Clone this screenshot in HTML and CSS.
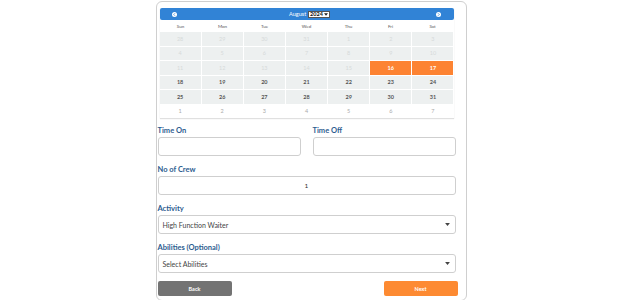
FILE: index.html
```html
<!DOCTYPE html>
<html lang="en">
  <head>
    <meta charset="UTF-8" />
    <title>Book Crew</title>
    <link rel="stylesheet" href="styles.css">
  </head>
  <body>
    <div class="cartao">
      <div class="calendario">
        <div class="cal-topo">
          <span class="seta-cal">
            <svg width="5" height="5" viewBox="0 0 10 10"><circle cx="5" cy="5" r="5" fill="#fff"/><path d="M6 2.5 L3.5 5 L6 7.5" stroke="#3183d6" stroke-width="1.6" fill="none"/></svg>
          </span>
          <div class="mes">
            <span>August</span>
            <span class="ano">2024 <svg width="4" height="3" viewBox="0 0 8 5"><path d="M0 0 L8 0 L4 5 Z" fill="#222"/></svg></span>
          </div>
          <span class="seta-cal">
            <svg width="5" height="5" viewBox="0 0 10 10"><circle cx="5" cy="5" r="5" fill="#fff"/><path d="M4 2.5 L6.5 5 L4 7.5" stroke="#3183d6" stroke-width="1.6" fill="none"/></svg>
          </span>
        </div>
        <div class="dias-semana">
          <span>Sun</span><span>Mon</span><span>Tue</span><span>Wed</span><span>Thu</span><span>Fri</span><span>Sat</span>
        </div>
        <div class="grade">
          <span class="passado">28</span><span class="passado">29</span><span class="passado">30</span><span class="passado">31</span><span class="passado">1</span><span class="passado">2</span><span class="passado">3</span>
          <span class="passado">4</span><span class="passado">5</span><span class="passado">6</span><span class="passado">7</span><span class="passado">8</span><span class="passado">9</span><span class="passado">10</span>
          <span class="passado">11</span><span class="passado">12</span><span class="passado">13</span><span class="passado">14</span><span class="passado">15</span><span class="ativo">16</span><span class="ativo">17</span>
          <span>18</span><span>19</span><span>20</span><span>21</span><span>22</span><span>23</span><span>24</span>
          <span>25</span><span>26</span><span>27</span><span>28</span><span>29</span><span>30</span><span>31</span>
          <span class="proximo">1</span><span class="proximo">2</span><span class="proximo">3</span><span class="proximo">4</span><span class="proximo">5</span><span class="proximo">6</span><span class="proximo">7</span>
        </div>
      </div>

      <div class="linha-dupla">
        <div class="campo">
          <label>Time On</label>
          <input type="text" class="entrada" />
        </div>
        <div class="campo">
          <label>Time Off</label>
          <input type="text" class="entrada" />
        </div>
      </div>

      <div class="campo">
        <label>No of Crew</label>
        <input type="text" class="entrada centro" value="1" />
      </div>

      <div class="campo">
        <label>Activity</label>
        <div class="entrada selecao">
          <span>High Function Waiter</span>
          <svg width="5" height="3" viewBox="0 0 8 5"><path d="M0 0 L8 0 L4 5 Z" fill="#444"/></svg>
        </div>
      </div>

      <div class="campo">
        <label>Abilities (Optional)</label>
        <div class="entrada selecao">
          <span>Select Abilities</span>
          <svg width="5" height="3" viewBox="0 0 8 5"><path d="M0 0 L8 0 L4 5 Z" fill="#444"/></svg>
        </div>
      </div>

      <div class="botoes">
        <button class="btn voltar">Back</button>
        <button class="btn proximo-btn">Next</button>
      </div>
    </div>
  </body>
</html>
```

FILE: styles.css
```css
* {
  margin: 0;
  padding: 0;
  box-sizing: border-box;
}

body {
  background-color: white;
  font-family: Lato, "Liberation Sans", sans-serif;
  color: #333;
}

.cartao {
  width: 311px;
  height: 300px;
  margin: 1px auto 0;
  border: 1px solid #cfcfcf;
  border-radius: 6px;
  padding: 6px 10px 0 1px;
}

.calendario {
  margin: 0 2px;
  box-shadow: 0 1px 1px rgba(0, 0, 0, 0.12);
}

.cal-topo {
  background-color: #3183d6;
  height: 12px;
  border-radius: 2px;
  display: flex;
  align-items: center;
  justify-content: space-between;
  padding: 0 12px;
}

.seta-cal {
  display: flex;
}

.mes {
  display: flex;
  align-items: center;
  gap: 2px;
  color: white;
  font-size: 5.5px;
  margin-left: 6px;
}

.ano {
  display: flex;
  align-items: center;
  gap: 1px;
  background: white;
  color: #111;
  border: 1px solid #555;
  height: 7px;
  padding: 0 1px;
  font-size: 5.5px;
  font-weight: bold;
}

.dias-semana {
  display: grid;
  grid-template-columns: repeat(7, 1fr);
  height: 12px;
  align-items: center;
  text-align: center;
  font-size: 4.5px;
  color: #555;
  background: white;
}

.grade {
  display: grid;
  grid-template-columns: repeat(7, 1fr);
  grid-auto-rows: 13.5px;
  gap: 1px;
  background: white;
}

.grade span {
  background-color: #edf0f0;
  display: flex;
  align-items: center;
  justify-content: center;
  font-size: 5.5px;
  font-weight: bold;
  color: #555;
}

.grade span.passado {
  color: #d6dada;
  font-weight: normal;
}

.grade span.ativo {
  background-color: #fd8332;
  color: white;
}

.grade span.proximo {
  background-color: white;
  color: #aaa;
  font-weight: normal;
}

.linha-dupla {
  display: flex;
  gap: 12px;
  margin-top: 8px;
}

.linha-dupla .campo {
  flex: 1;
  margin-top: 0;
}

.campo {
  display: flex;
  flex-direction: column;
  margin-top: 9px;
}

.campo label {
  font-size: 7.5px;
  font-weight: bold;
  color: #2c5d90;
  line-height: 10px;
  margin-bottom: 1px;
}

.entrada {
  height: 19px;
  border: 1px solid #cfcfcf;
  border-radius: 3px;
  background: white;
  font-family: inherit;
  font-size: 6.5px;
  color: #333;
  width: 100%;
}

.centro {
  text-align: center;
}

.selecao {
  display: flex;
  align-items: center;
  justify-content: space-between;
  padding: 0 5px 0 4px;
  font-size: 7px;
  color: #444;
}

.botoes {
  display: flex;
  justify-content: space-between;
  margin-top: 8px;
}

.btn {
  width: 74px;
  height: 15px;
  border: none;
  border-radius: 2px;
  color: white;
  font-family: inherit;
  font-size: 5.5px;
  font-weight: bold;
}

.voltar {
  background-color: #737373;
}

.proximo-btn {
  background-color: #fd8a32;
  margin-right: -2px;
}
```
